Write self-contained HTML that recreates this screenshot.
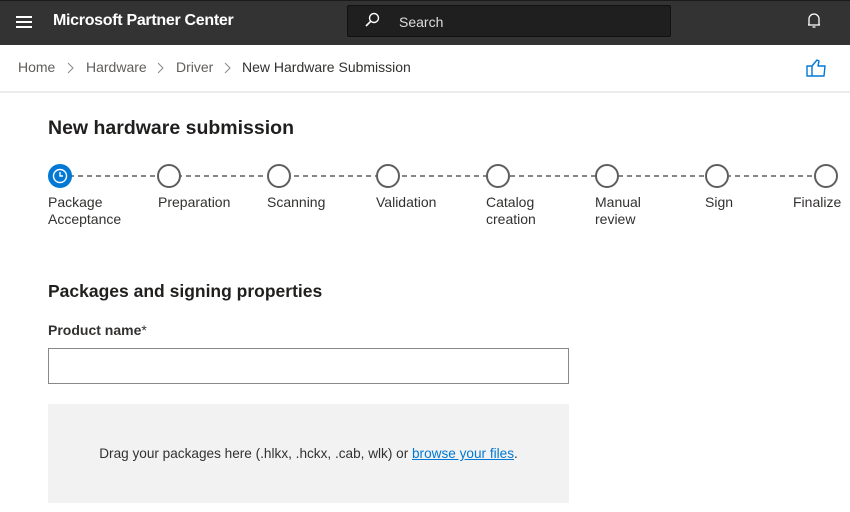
<!DOCTYPE html>
<html><head><style>
*{margin:0;padding:0;box-sizing:border-box}
body{width:850px;height:512px;overflow:hidden;background:#fff;font-family:"Liberation Sans",sans-serif;color:#323130;position:relative}
.a{position:absolute;white-space:nowrap}
.hdr{position:absolute;left:0;top:0;width:850px;height:45px;background:#333;border-top:1px solid #1b1b1b}
.lbl{font-size:14px;line-height:17px;color:#323130}
</style></head><body>
<div class="hdr"></div>
<div class="a" style="left:16px;top:16px;width:16px;height:2px;background:#fff"></div>
<div class="a" style="left:16px;top:21px;width:16px;height:2px;background:#fff"></div>
<div class="a" style="left:16px;top:26px;width:16px;height:2px;background:#fff"></div>
<div class="a" style="left:53px;top:12px;font-size:16px;font-weight:bold;color:#fff;letter-spacing:-0.3px">Microsoft Partner Center</div>
<div class="a" style="left:347px;top:5px;width:324px;height:32px;background:#1f1f1f;border:1px solid #111;border-radius:2px"></div>
<svg class="a" style="left:364px;top:12px" width="16" height="16" viewBox="0 0 16 16"><circle cx="10" cy="6" r="4.5" fill="none" stroke="#fff" stroke-width="1.4"/><line x1="6.8" y1="9.2" x2="2" y2="14" stroke="#fff" stroke-width="1.6"/></svg>
<div class="a" style="left:399px;top:14px;font-size:14px;color:#ddd">Search</div>
<svg class="a" style="left:806px;top:12px" width="16" height="18" viewBox="0 0 16 18"><path d="M3 13V7a5 5 0 0 1 10 0v6zM2 13h12M6.5 15h3" fill="none" stroke="#fff" stroke-width="1.3"/></svg>
<div class="a" style="left:18px;top:59px;font-size:14px;color:#605e5c">Home</div>
<svg class="a" style="left:66px;top:62px" width="8" height="12"><path d="M2 1l5 5-5 5" fill="none" stroke="#8a8886" stroke-width="1"/></svg>
<div class="a" style="left:86px;top:59px;font-size:14px;color:#605e5c">Hardware</div>
<svg class="a" style="left:156px;top:62px" width="8" height="12"><path d="M2 1l5 5-5 5" fill="none" stroke="#8a8886" stroke-width="1"/></svg>
<div class="a" style="left:176px;top:59px;font-size:14px;color:#605e5c">Driver</div>
<svg class="a" style="left:223px;top:62px" width="8" height="12"><path d="M2 1l5 5-5 5" fill="none" stroke="#8a8886" stroke-width="1"/></svg>
<div class="a" style="left:242px;top:59px;font-size:14px;color:#323130">New Hardware Submission</div>
<svg class="a" style="left:806px;top:58px" width="22" height="20" viewBox="0 0 22 20"><path d="M1 8h5v10H1zM6 8l5-6 2 1-1 5h7l-1 10H6" fill="none" stroke="#0078d4" stroke-width="1.4" stroke-linejoin="round"/></svg>
<div class="a" style="left:0;top:91px;width:850px;height:2px;background:#ebebeb"></div>
<div class="a" style="left:48px;top:117px;font-size:19.5px;font-weight:bold;color:#201f1e">New hardware submission</div>
<svg class="a" style="left:0;top:160px" width="850" height="32">
<line x1="60" y1="16" x2="826" y2="16" stroke="#605e5c" stroke-width="1.5" stroke-dasharray="5,4"/>
<circle cx="60" cy="16" r="11" fill="#0078d4" stroke="#0078d4" stroke-width="2"/>
<circle cx="60" cy="16" r="6.5" fill="none" stroke="#fff" stroke-width="1.4"/>
<path d="M60 12v4h3" fill="none" stroke="#fff" stroke-width="1.4"/>
<g fill="#fff" stroke="#605e5c" stroke-width="2">
<circle cx="169" cy="16" r="11"/><circle cx="279" cy="16" r="11"/><circle cx="388" cy="16" r="11"/><circle cx="498" cy="16" r="11"/><circle cx="607" cy="16" r="11"/><circle cx="717" cy="16" r="11"/><circle cx="826" cy="16" r="11"/></g>
</svg>
<div class="a lbl" style="left:48px;top:194px">Package<br>Acceptance</div>
<div class="a lbl" style="left:158px;top:194px">Preparation</div>
<div class="a lbl" style="left:267px;top:194px">Scanning</div>
<div class="a lbl" style="left:376px;top:194px">Validation</div>
<div class="a lbl" style="left:486px;top:194px">Catalog<br>creation</div>
<div class="a lbl" style="left:595px;top:194px">Manual<br>review</div>
<div class="a lbl" style="left:705px;top:194px">Sign</div>
<div class="a lbl" style="left:793px;top:194px">Finalize</div>
<div class="a" style="left:48px;top:281px;font-size:17.5px;font-weight:bold;color:#201f1e">Packages and signing properties</div>
<div class="a" style="left:48px;top:322px;font-size:14px;font-weight:bold;color:#323130">Product name<span style="font-weight:normal">*</span></div>
<div class="a" style="left:48px;top:348px;width:521px;height:36px;border:1px solid #8a8886;background:#fff"></div>
<div class="a" style="left:48px;top:404px;width:521px;height:99px;background:#f2f2f2"></div>
<div class="a" style="left:48px;top:446px;width:521px;text-align:center;font-size:13.6px;color:#323130">Drag your packages here (.hlkx, .hckx, .cab, wlk) or <span style="color:#0078d4;text-decoration:underline">browse your files</span>.</div>
</body></html>
